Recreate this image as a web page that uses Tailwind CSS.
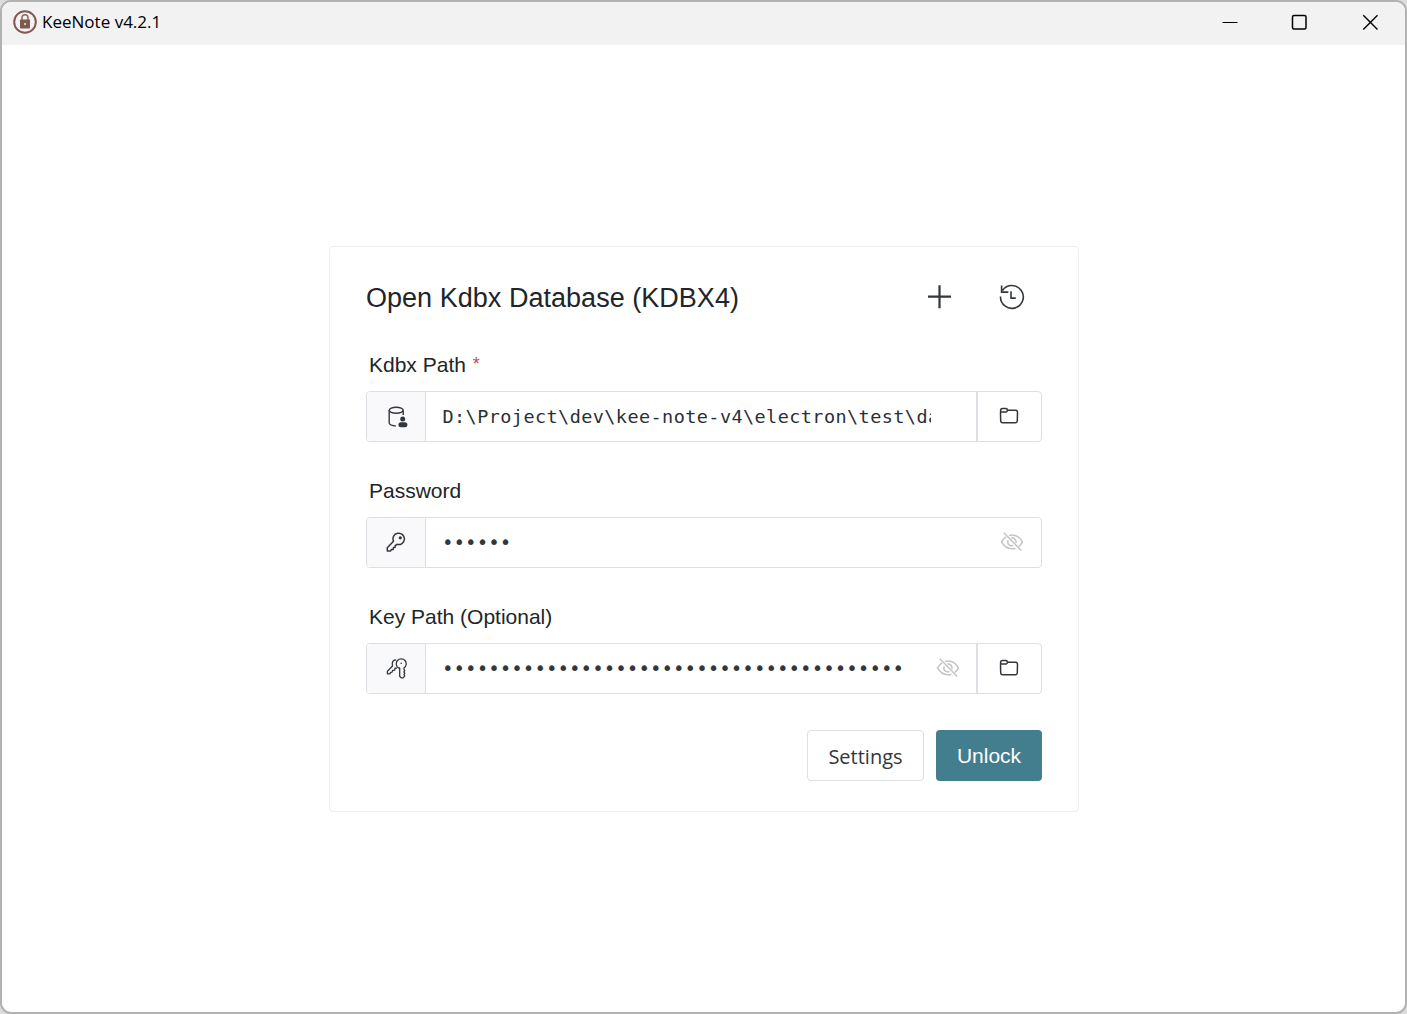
<!DOCTYPE html>
<html lang="en">
<head>
<meta charset="utf-8">
<title>KeeNote v4.2.1</title>
<script src="https://cdn.jsdelivr.net/npm/@tailwindcss/browser@4"></script>
</head>
<body class="h-screen overflow-hidden bg-[#dcdcdc] font-['Liberation_Sans',Arial,sans-serif] text-[#212529]">
<svg class="hidden">
  <symbol id="folder" viewBox="0 0 20 18" fill="none" stroke="currentColor" stroke-width="1.5"><path d="M1.600 5.500V3.500q0-1.900 1.900-1.900h3.300q1 0 1.600.9l.5.700h7.500q2.100 0 2.100 2l-.2 8.500q-.1 2-2 2H3.700q-1.900 0-2-2L1.500 5.900q0-.8.8-.8h3.900q1 0 1.600-.7l.9-1.100"/></symbol>
  <symbol id="eye-off" viewBox="0 0 24 20" fill="none" stroke="currentColor" stroke-width="1.5"><path d="M6 4.900Q3.300 6.500 1.500 9.900Q5.300 16.800 12 16.800Q14 16.800 15.500 16.200M9 3.500Q10.400 3.100 12 3.100Q18.700 3.100 22.500 9.900Q21.200 12.600 18.800 14.400M8.300 8.200Q6.900 11.300 9.500 13.200Q11.300 14.300 13.300 13.500M11.200 6.100Q13.600 5.700 15 7.200Q16.500 8.800 15.900 11M3.800.8L21.300 18.500"/></symbol>
</svg>
<div class="flex h-full flex-col overflow-hidden rounded-[11px] border-2 border-[#b2b2b2] bg-white">
  <header class="flex h-[43px] shrink-0 items-center bg-[#f2f2f2] pb-[3px] pl-[11px] text-black">
    <svg class="h-6 w-6 shrink-0" viewBox="0 0 24 24" fill="none"><circle cx="12" cy="12" r="10.800" stroke="#80594f" stroke-width="2"/><path d="M9 10V7.800a3 3 0 0 1 6 0V10" stroke="#8d685e" stroke-width="1.500"/><rect x="7" y="9.500" width="10" height="9" rx=".8" fill="#80594f"/><rect x="11.300" y="13" width="1.500" height="2" fill="#eee"/></svg>
    <span class="ml-[5px] grow font-['Open_Sans',sans-serif] text-[17px] leading-6 tracking-[0.01px]">KeeNote v4.2.1</span>
    <svg class="mr-[53px] h-4 w-4" viewBox="0 0 16 16" fill="none" stroke="currentColor"><path d="M.5 8.500h15" stroke-width="1.200"/></svg>
    <svg class="mr-[55px] h-4 w-4" viewBox="0 0 16 16" fill="none" stroke="currentColor"><rect x="1.500" y="1.500" width="13.500" height="13.500" rx="1.500" stroke-width="1.500"/></svg>
    <svg class="mr-[27px] h-4 w-4 overflow-visible" viewBox="0 0 16 16" fill="none" stroke="currentColor"><path d="M1.300 1.300l14.200 14.200M15.500 1.300L1.300 15.500" stroke-width="1.400"/></svg>
  </header>
  <main class="flex grow justify-center pt-[201px]">
    <section class="ml-px flex h-[566px] w-[750px] flex-col rounded-[4px] border border-[#eeeeef] px-9 pt-[29px]">
      <div class="flex h-[42px] items-center">
        <h1 class="grow pt-px text-[27px] leading-[42px] tracking-[0.03px]">Open Kdbx Database (KDBX4)</h1>
        <svg class="mr-[48px] h-6 w-6 overflow-visible" viewBox="0 0 24 24" fill="none" stroke="#33373c" stroke-width="2.200"><path d="M12.500 .2v23M1 11.700h23"/></svg>
        <svg class="mr-[17px] h-[26px] w-[26px]" viewBox="0 0 26 26" fill="none" stroke="#33373c" stroke-width="1.600"><path d="M1.500 12.500A11.400 11.400 0 1 0 3.500 6.500M2.600 1.500v6.600h6.800M12 7.200v6.900h4.800"/></svg>
      </div>
      <label class="mt-[33px] ml-[3px] text-[21px] leading-[28px]">Kdbx Path <span class="relative -top-[2px] left-px text-[18px] text-[#c94b55]">*</span></label>
      <div class="mt-[11px] flex h-[51px] rounded-[4px] border border-[#dcdfe3]">
        <div class="flex w-[59px] items-center justify-center rounded-l-[3px] border-r border-[#dcdfe3] bg-[#f9f9fc]"><svg class="ml-[3px] h-[22px] w-[20px]" viewBox="0 0 20 22" fill="none" stroke="#33373c" stroke-width="1.400"><ellipse cx="8.200" cy="4.200" rx="7" ry="3"/><path d="M1.200 4.200v13q.6 2.500 6.600 2.800M15.200 4.200V9"/><circle cx="14.700" cy="13" r="2.500" fill="#33373c" stroke="none"/><rect x="10.400" y="16.200" width="9" height="5" rx="2.500" fill="#33373c" stroke="none"/></svg></div>
        <div class="flex grow items-center border-r-2 border-[#dcdfe3] pl-[16.500px]"><span class="w-[488px] overflow-hidden whitespace-nowrap font-['DejaVu_Sans_Mono',monospace] text-[18.500px] tracking-[0.42px] text-[#2b2f34]">D:\Project\dev\kee-note-v4\electron\test\data</span></div>
        <div class="flex w-[63px] items-center justify-center pr-[1px]"><svg class="mb-px h-[18px] w-5 text-[#33373c]"><use href="#folder"/></svg></div>
      </div>
      <label class="mt-[35px] ml-[3px] text-[21px] leading-[28px]">Password</label>
      <div class="mt-[12px] flex h-[51px] rounded-[4px] border border-[#dcdfe3]">
        <div class="flex w-[59px] items-center justify-center rounded-l-[3px] border-r border-[#dcdfe3] bg-[#f9f9fc]"><svg class="mb-[2px] h-5 w-5" viewBox="0 0 20 20" fill="none" stroke="#33373c" stroke-width="1.500" stroke-linejoin="round"><path d="M7.500 9.200A5.700 5.700 0 1 1 11 12.300L9.200 13.700v1.600l-1.700.2-.3 1.900-1.900.2-.7 1.400H1.300v-3.300z"/><circle cx="14.300" cy="5.800" r="1.600" fill="#33373c" stroke="none"/></svg></div>
        <div class="flex grow items-center pl-4"><span class="grow pt-px font-['DejaVu_Sans_Mono',monospace] text-[19.200px] text-[#33373c]">••••••</span><svg class="mr-[17px] mb-[2px] h-5 w-6 text-[#c4c4c4]"><use href="#eye-off"/></svg></div>
      </div>
      <label class="mt-[35px] ml-[3px] text-[21px] leading-[28px]">Key Path (Optional)</label>
      <div class="mt-[12px] flex h-[51px] rounded-[4px] border border-[#dcdfe3]">
        <div class="flex w-[59px] items-center justify-center rounded-l-[3px] border-r border-[#dcdfe3] bg-[#f9f9fc]"><svg class="ml-px h-[22px] w-[22px]" viewBox="0 0 22 22" fill="none" stroke="#33373c" stroke-width="1.300" stroke-linejoin="round"><path d="M12.500 10A5 5 0 1 1 18 10v1.700l.8 1-.9 1.200.9 1.400-.9 1.200.9 1.300-1.800 2.100h-1.800l-1.500-1.600V10z"/><circle cx="15.200" cy="5.200" r=".8" fill="#33373c" stroke="none"/><path d="M10.200 1.800Q6.800 1.600 6.300 5.200L6.500 8 1.400 13.300v2.500h2.700l.5-1.500 1.500-.1.500-1.800 2.100-.3.300-2h2"/></svg></div>
        <div class="flex grow items-center border-r-2 border-[#dcdfe3] pl-4"><span class="grow pt-px font-['DejaVu_Sans_Mono',monospace] text-[19.200px] text-[#33373c]">••••••••••••••••••••••••••••••••••••••••</span><svg class="mr-4 mb-[2px] h-5 w-6 shrink-0 text-[#c4c4c4]"><use href="#eye-off"/></svg></div>
        <div class="flex w-[63px] items-center justify-center pr-[1px]"><svg class="mb-px h-[18px] w-5 text-[#33373c]"><use href="#folder"/></svg></div>
      </div>
      <div class="mt-9 flex justify-end gap-3">
        <button class="h-[51px] w-[117px] rounded-[4px] border border-[#dcdfe3] pt-[2px] font-['Open_Sans',sans-serif] text-[20px] text-[#33373c]">Settings</button>
        <button class="h-[51px] w-[106px] rounded-[4px] bg-[#427e8d] text-[21px] text-white">Unlock</button>
      </div>
    </section>
  </main>
</div>
</body>
</html>
